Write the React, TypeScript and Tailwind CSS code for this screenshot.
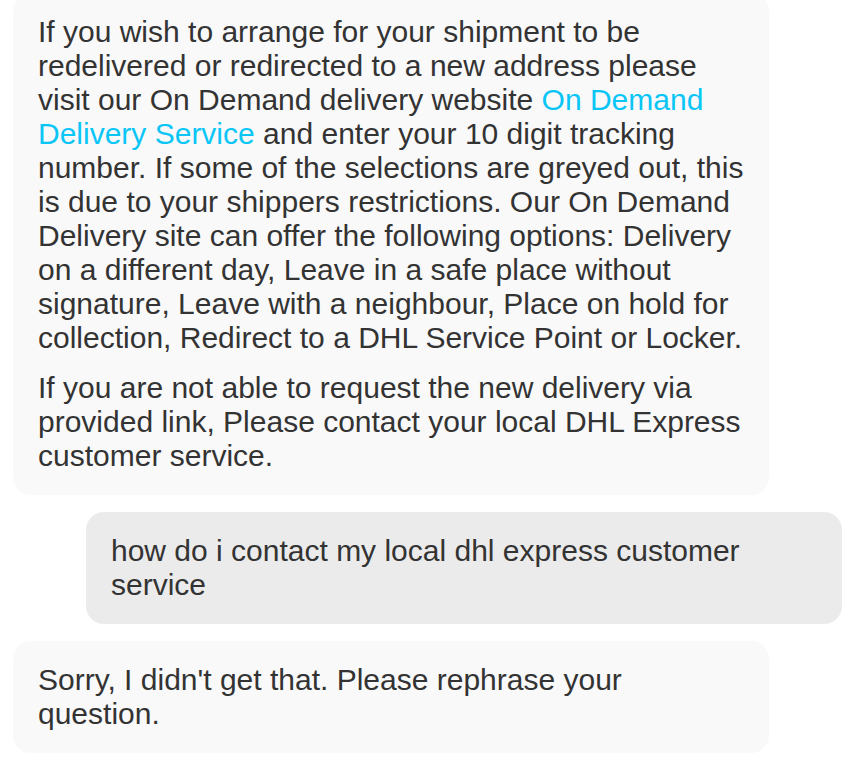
import React from 'react';

type Msg = { from: 'bot' | 'user'; body: React.ReactNode };

const messages: Msg[] = [
  {
    from: 'bot',
    body: (
      <>
        <p>
          If you wish to arrange for your shipment to be redelivered or redirected to a new address please visit
          our On Demand delivery website{' '}
          <a href="#" className="text-[#0ac6f7]">
            On Demand Delivery Service
          </a>{' '}
          and enter your 10 digit tracking number. If some of the selections are greyed out, this is due to your
          shippers restrictions. Our On Demand Delivery site can offer the following options: Delivery on a
          different day, Leave in a safe place without signature, Leave with a neighbour, Place on hold for
          collection, Redirect to a DHL Service Point or Locker.
        </p>
        <p className="mt-4">
          If you are not able to request the new delivery via provided link, Please contact your local DHL Express
          customer service.
        </p>
      </>
    ),
  },
  { from: 'user', body: <p>how do i contact my local dhl express customer service</p> },
  { from: 'bot', body: <p>Sorry, I didn't get that. Please rephrase your question.</p> },
];

export default function App() {
  return (
    <div
      className="min-h-screen bg-white overflow-hidden text-[30px] leading-[34px] text-[#333333]"
      style={{ fontFamily: '"Liberation Sans", Arial, sans-serif' }}
    >
      <div className="flex flex-col gap-[17px] -mt-[7px]">
        {messages.map((m, i) => (
          <div key={i} className={m.from === 'bot' ? 'flex justify-start pl-[13px]' : 'flex justify-end pr-[6px]'}>
            <div
              className={`w-[756px] rounded-[18px] px-[25px] py-[22px] ${
                m.from === 'bot' ? 'bg-[#f9f9f9]' : 'bg-[#ebebeb]'
              }`}
            >
              {m.body}
            </div>
          </div>
        ))}
      </div>
    </div>
  );
}
